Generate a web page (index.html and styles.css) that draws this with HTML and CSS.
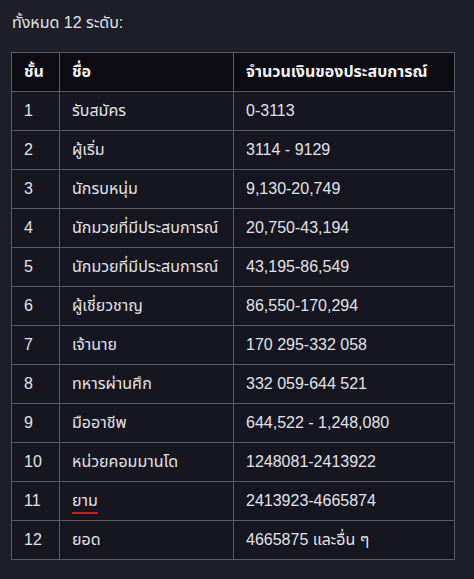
FILE: index.html
```html
<!DOCTYPE html>
<html lang="th">
<head>
<meta charset="utf-8">
<link rel="stylesheet" href="styles.css">
</head>
<body>
<div class="page">
  <p class="title">ทั้งหมด 12 ระดับ:</p>
  <table class="levels">
    <thead>
      <tr><th class="c1">ชั้น</th><th class="c2">ชื่อ</th><th class="c3">จำนวนเงินของประสบการณ์</th></tr>
    </thead>
    <tbody>
      <tr><td>1</td><td>รับสมัคร</td><td>0-3113</td></tr>
      <tr><td>2</td><td>ผู้เริ่ม</td><td>3114 - 9129</td></tr>
      <tr><td>3</td><td>นักรบหนุ่ม</td><td>9,130-20,749</td></tr>
      <tr><td>4</td><td>นักมวยที่มีประสบการณ์</td><td>20,750-43,194</td></tr>
      <tr><td>5</td><td>นักมวยที่มีประสบการณ์</td><td>43,195-86,549</td></tr>
      <tr><td>6</td><td>ผู้เชี่ยวชาญ</td><td>86,550-170,294</td></tr>
      <tr><td>7</td><td>เจ้านาย</td><td>170 295-332 058</td></tr>
      <tr><td>8</td><td>ทหารผ่านศึก</td><td>332 059-644 521</td></tr>
      <tr><td>9</td><td>มืออาชีพ</td><td>644,522 - 1,248,080</td></tr>
      <tr><td>10</td><td>หน่วยคอมมานโด</td><td>1248081-2413922</td></tr>
      <tr><td>11</td><td><span class="spell">ยาม</span></td><td>2413923-4665874</td></tr>
      <tr><td>12</td><td>ยอด</td><td>4665875 และอื่น ๆ</td></tr>
    </tbody>
  </table>
</div>
</body>
</html>
```

FILE: styles.css
```css
html, body {
  margin: 0;
  padding: 0;
}
body {
  background: #1d1e28;
  color: #e2e2e6;
  font-family: "Liberation Sans", "Noto Sans Thai", "Noto Sans", sans-serif;
  font-size: 16px;
  width: 474px;
  height: 579px;
  overflow: hidden;
}
.page {
  padding: 13px 0 0 11px;
}
.title {
  margin: 0 0 19px 1px;
  line-height: 20px;
  font-size: 16px;
}
.levels {
  border-collapse: collapse;
  background: #161621;
  width: 444px;
}
.levels th, .levels td {
  border: 1px solid #5a5a66;
  padding: 0 12px;
  height: 38px;
  text-align: left;
  vertical-align: middle;
  line-height: 20px;
}
.levels thead tr {
  background: #0c0b12;
}
.levels th {
  font-weight: bold;
  color: #f2f2f4;
}
.c1 { width: 23px; }
.c2 { width: 149px; }
.spell {
  text-decoration: underline;
  text-decoration-color: #e0141e;
  text-decoration-thickness: 2px;
  text-underline-offset: 6px;
}
```
